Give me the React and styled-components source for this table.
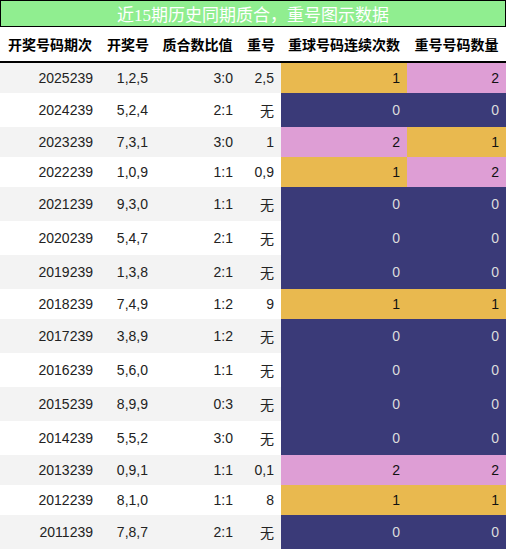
import React from 'react'
import styled, { createGlobalStyle } from 'styled-components'

const GlobalStyle = createGlobalStyle`
  html, body {
    margin: 0;
    padding: 0;
    background: #fff;
  }
  body {
    font-family: "Liberation Sans", "Noto Sans CJK SC", sans-serif;
  }
`

const rows = [
  ['2025239', '1,2,5', '3:0', '2,5', 1, 2],
  ['2024239', '5,2,4', '2:1', '无', 0, 0],
  ['2023239', '7,3,1', '3:0', '1', 2, 1],
  ['2022239', '1,0,9', '1:1', '0,9', 1, 2],
  ['2021239', '9,3,0', '1:1', '无', 0, 0],
  ['2020239', '5,4,7', '2:1', '无', 0, 0],
  ['2019239', '1,3,8', '2:1', '无', 0, 0],
  ['2018239', '7,4,9', '1:2', '9', 1, 1],
  ['2017239', '3,8,9', '1:2', '无', 0, 0],
  ['2016239', '5,6,0', '1:1', '无', 0, 0],
  ['2015239', '8,9,9', '0:3', '无', 0, 0],
  ['2014239', '5,5,2', '3:0', '无', 0, 0],
  ['2013239', '0,9,1', '1:1', '0,1', 2, 2],
  ['2012239', '8,1,0', '1:1', '8', 1, 1],
  ['2011239', '7,8,7', '2:1', '无', 0, 0],
]

// 0 = 深蓝, 1 = 金色, 2 = 粉色
const cellColors = {
  0: { bg: '#3a3a78', fg: '#dcdcdc' },
  1: { bg: '#e9b94f', fg: '#111' },
  2: { bg: '#de9ed5', fg: '#111' },
}

function App() {
  return (
    <>
      <GlobalStyle />
      <Wrapper>
        <Title>近15期历史同期质合，重号图示数据</Title>
        <Table>
          <colgroup>
            <col style={{ width: 100 }} />
            <col style={{ width: 55 }} />
            <col style={{ width: 85 }} />
            <col style={{ width: 41 }} />
            <col style={{ width: 126 }} />
            <col style={{ width: 99 }} />
          </colgroup>
          <thead>
            <tr>
              <Th>开奖号码期次</Th>
              <Th>开奖号</Th>
              <Th>质合数比值</Th>
              <Th>重号</Th>
              <Th>重球号码连续次数</Th>
              <Th>重号号码数量</Th>
            </tr>
          </thead>
          <tbody>
            {rows.map((r, i) => (
              <Row key={r[0]} $odd={i % 2 === 0}>
                <Td>{r[0]}</Td>
                <Td>{r[1]}</Td>
                <Td>{r[2]}</Td>
                <Td>{r[3]}</Td>
                <ColorTd $level={r[4]}>{r[4]}</ColorTd>
                <ColorTd $level={r[5]}>{r[5]}</ColorTd>
              </Row>
            ))}
          </tbody>
        </Table>
      </Wrapper>
    </>
  )
}

export default App

const Wrapper = styled.div`
  width: 506px;
`

const Title = styled.div`
  background: #90ee90;
  border: 1px solid #000;
  color: #fff;
  font-family: "Liberation Serif", "Noto Sans CJK SC", serif;
  font-size: 17px;
  text-align: center;
  white-space: nowrap;
`

const Table = styled.table`
  width: 506px;
  table-layout: fixed;
  border-collapse: collapse;
  font-size: 14px;
`

const Th = styled.th`
  padding: 7px 7px;
  font-weight: bold;
  color: #000;
  white-space: nowrap;
  text-align: center;
  border-bottom: 2px solid #000;
`

const Row = styled.tr`
  background: ${p => (p.$odd ? '#f3f3f3' : '#fff')};
`

const Td = styled.td`
  padding: 7px 7px;
  text-align: right;
  color: #222;
  white-space: nowrap;
`

const ColorTd = styled(Td)`
  background: ${p => cellColors[p.$level].bg};
  color: ${p => cellColors[p.$level].fg};
`
